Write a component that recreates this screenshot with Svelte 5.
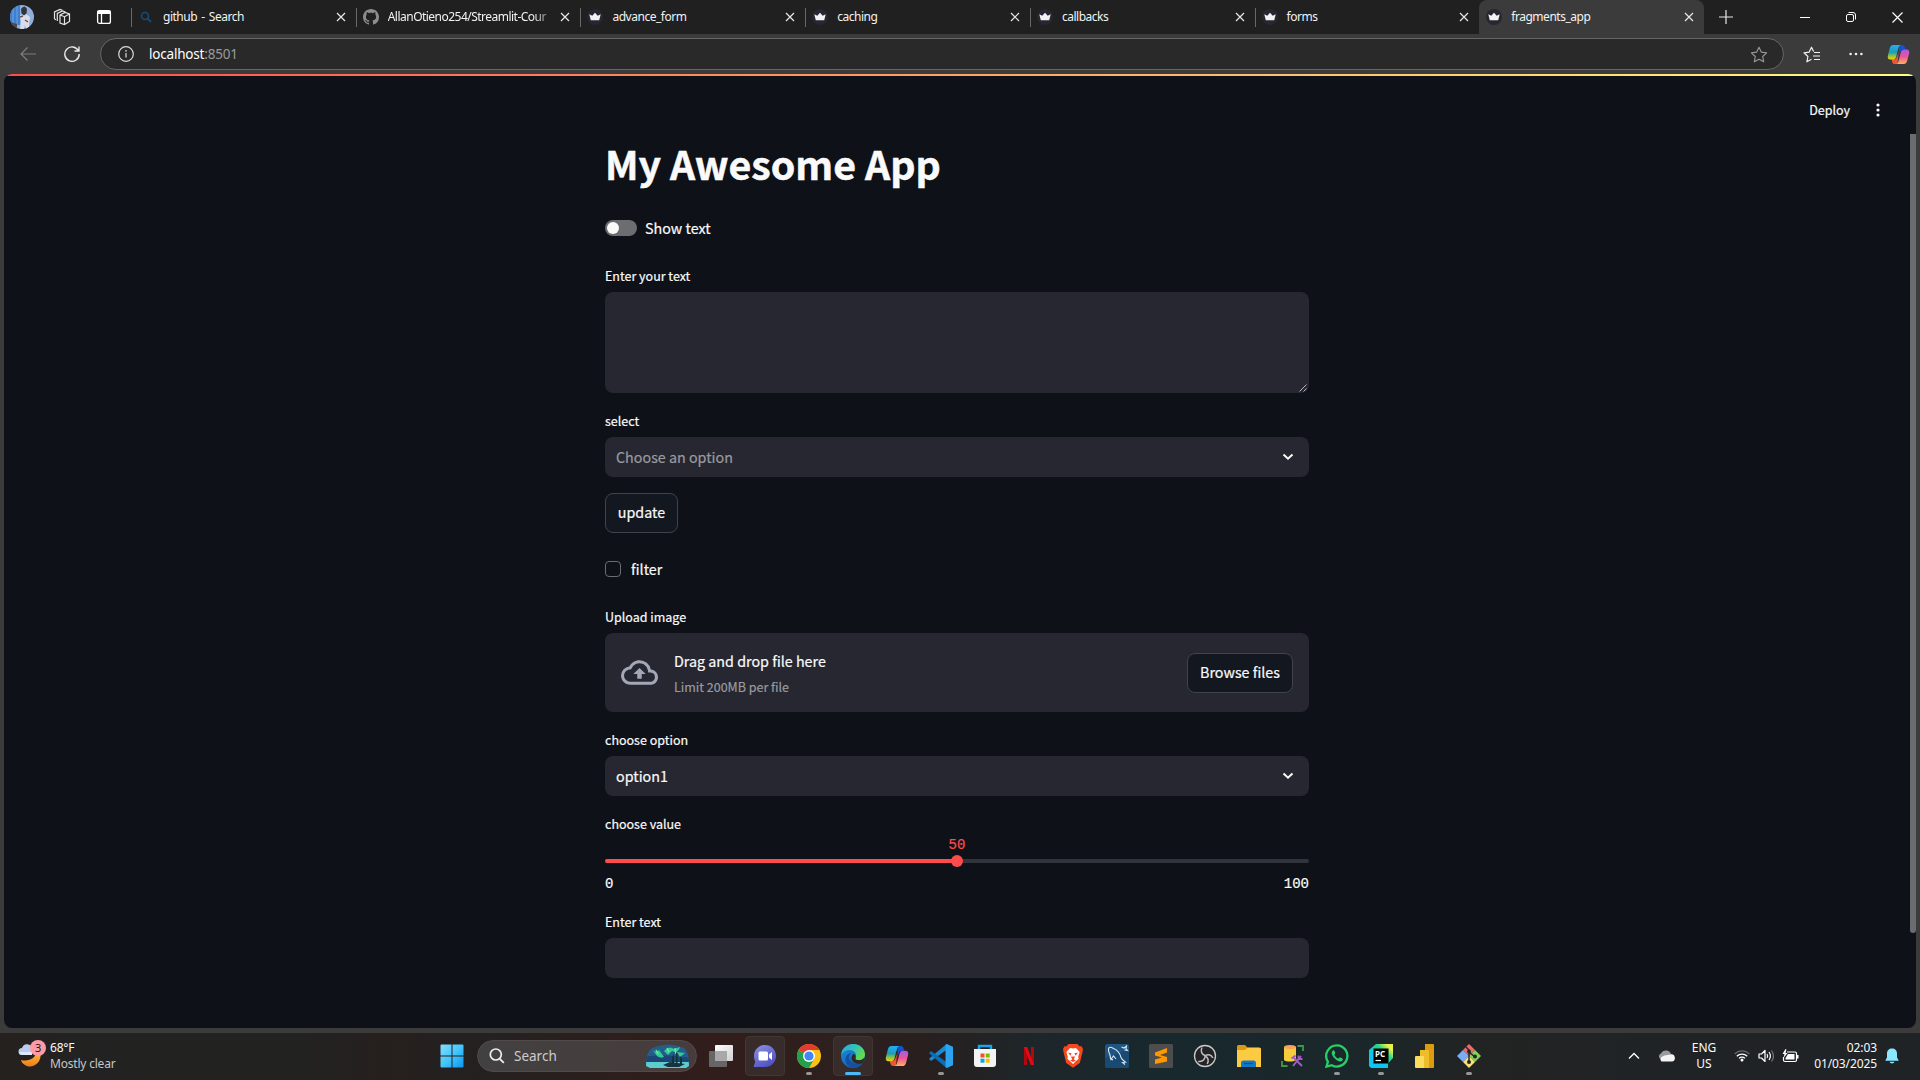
<script>
  const tabs = [
    { title: 'github - Search', icon: 'search' },
    { title: 'AllanOtieno254/Streamlit-Cour', icon: 'github', fade: true },
    { title: 'advance_form', icon: 'crown' },
    { title: 'caching', icon: 'crown' },
    { title: 'callbacks', icon: 'crown' },
    { title: 'forms', icon: 'crown' },
    { title: 'fragments_app', icon: 'crown', active: true }
  ];
  const apps = [
    { name: 'taskview' },
    { name: 'chat', lit: true },
    { name: 'chrome', open: true },
    { name: 'edge', lit: true, focus: true },
    { name: 'copilot' },
    { name: 'vscode', open: true },
    { name: 'store' },
    { name: 'netflix' },
    { name: 'brave' },
    { name: 'mysql' },
    { name: 'sublime' },
    { name: 'obs' },
    { name: 'folder' },
    { name: 'sqltools' },
    { name: 'whatsapp', open: true },
    { name: 'pycharm', open: true },
    { name: 'powerbi' },
    { name: 'git', open: true }
  ];
  let value = 50;
</script>

{#snippet close()}
  <svg class="close" width="10" height="10" viewBox="0 0 10 10"><path d="M1 1l8 8M9 1l-8 8" stroke="#e8e8e8" stroke-width="1.2" fill="none" /></svg>
{/snippet}

{#snippet copilot(size)}
  <svg width={size} height={size} viewBox="0 0 24 24">
    <defs>
      <linearGradient id="cpA" x1="0" y1="0" x2="0" y2="1"><stop offset="0" stop-color="#22b0f5" /><stop offset=".5" stop-color="#1f9bb8" /><stop offset=".75" stop-color="#8cc43c" /><stop offset="1" stop-color="#f5d30f" /></linearGradient>
      <linearGradient id="cpB" x1="0" y1="0" x2="0" y2="1"><stop offset="0" stop-color="#a45bea" /><stop offset=".5" stop-color="#ec5597" /><stop offset="1" stop-color="#ffb260" /></linearGradient>
    </defs>
    <path d="M13 2h3c1.500 0 2.200 1 2.600 2.500l.6 2.300h-2.500c-1.600 0-2.400.8-2.900 2.400L12 14z" fill="#1552d0" />
    <path d="M11 22H8c-1.500 0-2.200-1-2.600-2.500L4.800 17h2.500c1.600 0 2.400-.8 2.900-2.400L12 10z" fill="#f2562e" />
    <path d="M6.500 2h8c-1.300.3-2 1.300-2.400 2.700L9.600 14c-.6 2.200-1.500 3.300-3.800 3.300H3.600C1 17.300.3 15.400 1 12.700l2-7.600C3.600 3 4.600 2 6.500 2z" fill="url(#cpA)" />
    <path d="M17.500 22h-8c1.300-.3 2-1.300 2.400-2.700l2.500-9.300c.6-2.200 1.500-3.300 3.800-3.300h2.200c2.600 0 3.300 1.900 2.600 4.600l-2 7.600c-.6 2.100-1.600 3.100-3.500 3.100z" fill="url(#cpB)" />
  </svg>
{/snippet}

{#snippet chevron()}
  <svg width="12" height="8" viewBox="0 0 12 8"><path d="M1.500 1.500L6 5.700l4.500-4.200" fill="none" stroke="#fafafa" stroke-width="2" /></svg>
{/snippet}

{#snippet appIcon(name)}
  {#if name === 'copilot'}
    {@render copilot(24)}
  {:else}
    <svg width="24" height="24" viewBox="0 0 24 24">
      {#if name === 'taskview'}
        <defs><linearGradient id="tvA" x2="1" y2="1"><stop stop-color="#fff" /><stop offset="1" stop-color="#d0d0d0" /></linearGradient></defs>
        <rect x="6" y="1" width="18" height="16" rx="1" fill="url(#tvA)" />
        <rect x="0" y="7" width="18" height="16" rx="1" fill="#666" />
        <rect x="6" y="7" width="12" height="10" fill="#a9a9a9" />
      {:else if name === 'chat'}
        <defs><linearGradient id="chA" x2=".6" y2="1"><stop stop-color="#8f92e0" /><stop offset="1" stop-color="#5052c5" /></linearGradient></defs>
        <path d="M12 1C18.200 1 23 5.800 23 12S18.200 23 12 23H1.500Q.5 23 .9 22L2.300 17.500C1.400 15.800 1 14 1 12 1 5.800 5.800 1 12 1z" fill="url(#chA)" />
        <rect x="5.500" y="7.500" width="9.500" height="9" rx="1.500" fill="#fff" /><path d="M16 10.500l3-2.500v8l-3-2.500z" fill="#fff" />
      {:else if name === 'chrome'}
        <circle cx="12" cy="12" r="12" fill="#fbc116" />
        <path d="M12 12L1.600 6A12 12 0 0122.400 6H12z" fill="#e33b2e" />
        <path d="M1.600 6A12 12 0 0012 24l5.200-9L12 12z" fill="#24a148" />
        <circle cx="12" cy="12" r="6" fill="#fff" /><circle cx="12" cy="12" r="4.600" fill="#4285f4" />
      {:else if name === 'edge'}
        <defs>
          <linearGradient id="edA" x1="0" x2="1" y2=".5"><stop stop-color="#2aa6e0" /><stop offset=".6" stop-color="#36c5b0" /><stop offset="1" stop-color="#63dc4b" /></linearGradient>
          <linearGradient id="edB" x2=".5" y2="1"><stop stop-color="#1d8fdb" /><stop offset="1" stop-color="#1262b5" /></linearGradient>
        </defs>
        <circle cx="12" cy="12" r="12" fill="url(#edB)" />
        <path d="M0 11C1 4 6 0 12 0c7 0 12 5 12 10.500 0 3.500-2.500 5.700-6 5.700-2.500 0-3.900-1-3.500-2C16.500 9 12.500 6 8.500 6 4.500 6 1.200 8.300 0 11z" fill="url(#edA)" />
        <path d="M10 9.500c-5 4 0 12.500 10.500 10-5 6.800-15 4.500-16-3C4 12 7 9.200 10 9.500z" fill="#1450a0" />
        <path d="M14.500 14.200c-.5 1 1 2 3.500 2 2.600 0 4.600-1.200 5.500-3 .2 2-.6 4.200-2 6-6 2-11-1.200-11-5.200 0-1.900 1-3.400 2.500-4 1.500.7 2.200 2.500 1.500 4.200z" fill="#302825" />
      {:else if name === 'vscode'}
        <path d="M17.500 0L24 3v18l-6.500 3z" fill="#2aa5f2" />
        <path d="M17.500 0L0 14.800l2 2.200 16-11.500z" fill="#1b89d3" />
        <path d="M17.500 24L0 9.200 2 7l16 11.500z" fill="#0a6db5" />
        <path d="M17.500 0L24 3v18l-6.500 3-1-1.500V1.500z" fill="#2ba3ef" />
      {:else if name === 'store'}
        <path d="M6 7V2h12v5" fill="none" stroke="#1fa3e8" stroke-width="2.400" />
        <path d="M1 5h22v15q0 3-3 3H4q-3 0-3-3z" fill="#f3f3f3" />
        <path d="M7.500 9.500h4v4h-4z" fill="#f25022" /><path d="M12.700 9.500h4v4h-4z" fill="#7fba00" /><path d="M7.500 14.700h4v4h-4z" fill="#00a4ef" /><path d="M12.700 14.700h4v4h-4z" fill="#ffb900" />
      {:else if name === 'netflix'}
        <path d="M7 3h3v18H7zM14 3h3v18h-3z" fill="#b30710" /><path d="M7 3h3.200L17 21h-3.200z" fill="#e50914" />
      {:else if name === 'brave'}
        <path d="M7.500 0h9l2 2.300 2-.1L22 5l-.5 3L18.800 19 12 23.800 5.200 19 2.500 8 2 5l1.500-2.800 2 .1z" fill="#f6471d" />
        <path d="M12 4.500l3-.5 3.600 4-1.300 4.500.2 2.500-3 2.500-2.500 2.500-2.500-2.500-3-2.500.2-2.500L5.400 8 9 4z" fill="#fff" />
        <path d="M7 8.500l3.500.8-1 2.500zM17 8.500l-3.500.8 1 2.500zM10 12.500h4l-1.200 3 2 1L12 18l-2.800-1.500 2-1z" fill="#f6471d" />
      {:else if name === 'mysql'}
        <rect width="24" height="24" rx="2.500" fill="#1f5583" /><path d="M0 14l24-9v17q0 2-2 2H2q-2 0-2-2z" fill="#194a73" />
        <path d="M8 16L5.500 14.500 5 11C3.500 8 3 5.500 4 3.800 5 2.500 7 3.500 8.500 4.500c4 1.500 6.500 5 7.500 9 .8 2 2.800 3.500 4.500 4.700l-3 .3 2.500 2M5 11l1 4.500L8.500 12l2.500 3M16.500 3l2.500 1 2.500-2-.5 3 1.500 1.500-3-.5" fill="none" stroke="#dbe9f1" stroke-width="1.100" />
      {:else if name === 'sublime'}
        <rect width="24" height="24" rx="1.500" fill="#4d4d4d" />
        <path d="M6 8.500L18 4v4.500l-7 2.500 7 2v4.500L6 20v-4.500l7-2-7-2z" fill="#ff9800" />
      {:else if name === 'obs'}
        <circle cx="12" cy="12" r="10.500" fill="#232326" stroke="#c9c9c9" stroke-width="1.300" />
        <path d="M9 3.500c-2 4 0 7 3.200 8.300M20 14c-2-4-5.800-4-7.800-2.200M12.200 11.800c-.2 4-3 6.200-7 5.700M12.200 11.800c3.300 2 3.600 5 2 8" fill="none" stroke="#bdbdbd" stroke-width="1.500" />
      {:else if name === 'folder'}
        <path d="M0 2.500Q0 1 1.500 1H8l2.500 2.500H22q2 0 2 2V10H0z" fill="#d79a12" />
        <path d="M0 6h8l2.500-2.200H22.500Q24 3.800 24 5.500V23H0z" fill="#fccb42" />
        <path d="M4 23v-4q0-2.500 2.500-2.500h10Q19 16.500 19 19v4z" fill="#1278cc" /><path d="M7 19.500h9" stroke="#0a4f91" stroke-width="1.300" />
      {:else if name === 'sqltools'}
        <path d="M3 3v13c2 2 9 2 12 0V3z" fill="#f7cc3b" /><ellipse cx="9" cy="3" rx="6" ry="2" fill="#f7a35c" />
        <path d="M16.500 2H22v5M1 17v5h5.500" fill="none" stroke="#3e9a48" stroke-width="1.800" />
        <path d="M12 13l9 9M20 12l-8 10" stroke="#a35ac4" stroke-width="2" /><path d="M10.500 14.500l4-3M17.500 11.500v3.500h4" stroke="#a35ac4" stroke-width="1.800" fill="none" />
      {:else if name === 'whatsapp'}
        <path d="M12 1.300a10.600 10.600 0 11-5.300 19.900L1.500 22.600l1.400-5A10.600 10.600 0 0112 1.300z" fill="#19292d" stroke="#27cf66" stroke-width="2.300" />
        <path d="M8.500 6.300c-3 1.300-2 5 1.200 8.200s6.800 4.300 8.200 1.300c.4-1-.6-1.500-2.600-2.400-1-.3-1.300 1.500-2.100 1.200-1.600-.7-3.100-2.200-3.700-3.700-.3-.8 1-1.200.7-2.200-.5-1.700-.9-2.600-1.700-2.400z" fill="#27cf66" />
      {:else if name === 'pycharm'}
        <defs><linearGradient id="pyA" x1="0" y1="1" x2="1" y2="0"><stop offset=".35" stop-color="#0cc5f0" /><stop offset=".65" stop-color="#21d789" /><stop offset=".85" stop-color="#e8f04a" /></linearGradient></defs>
        <path d="M7 0h17v14l-5 5.500V24H2l-2-2V6z" fill="url(#pyA)" /><rect x="4.500" y="4.500" width="15" height="15" />
        <text x="6" y="12.500" class="pc">PC</text><path d="M6.500 16.500h5.500" stroke="#fff" stroke-width="1.200" />
      {:else if name === 'powerbi'}
        <path d="M12 0h8q1 0 1 1v22q0 1-1 1h-8z" fill="#dc9b10" /><path d="M7 6h8q1 0 1 1v17H7z" fill="#efbd28" /><path d="M2 13q0-1 1-1h7q1 0 1 1v11H3q-1 0-1-1z" fill="#fbdc5c" />
      {:else}
        <path d="M12 0l6 6-6 6-6-6z" fill="#f06a6a" /><path d="M6 6l6 6-6 6-6-6z" fill="#79aef7" /><path d="M18 6l6 6-6 6-6-6z" fill="#83cf59" /><path d="M12 12l6 6-6 6-6-6z" fill="#fbe07a" />
        <path d="M9 3l3 3v13M12 8l6 5" fill="none" stroke="#262626" stroke-width="1.500" /><circle cx="12" cy="7.500" r="2" fill="#262626" /><circle cx="12" cy="18" r="2" fill="#262626" /><circle cx="18" cy="12.500" r="2" fill="#262626" />
      {/if}
    </svg>
  {/if}
{/snippet}

<div class="screen">
  <div class="tabstrip">
    <div class="profile">
      <svg width="24" height="24" viewBox="0 0 24 24">
        <defs><clipPath id="av"><circle cx="12" cy="12" r="12" /></clipPath></defs>
        <g clip-path="url(#av)">
          <rect width="24" height="24" fill="#8fb0dc" /><path d="M0 0h10v20H0z" fill="#3f7fcf" /><path d="M3 0v20M7 0v20" stroke="#6ca2e3" />
          <path d="M10 10l6-1 4 3-1 7 1 5h-4l-1-4-1 4h-4l1-7z" fill="#dadceb" /><path d="M11 4q3.500-5 6 0l-.5 4.500-2.500 2-2.500-2z" fill="#33343e" /><path d="M10 12l3-1M15 15l3 2" stroke="#69514b" stroke-width="1.500" /><path d="M0 17l7 2v5H0z" fill="#59453f" />
        </g>
      </svg>
    </div>
    <div class="tool">
      <svg width="18" height="18" viewBox="0 0 18 18" fill="none" stroke="#e4e4e4" stroke-width="1.200"><path d="M7 7l5-2.500 4.500 1.500v7.500l-5 3L7 15zM7 7l4.500 1.700 5-2.700M11.500 8.700v7.500M4.300 13V5.500L9.500 3l3 1M1.500 11V4L7 1.500l2.500.8M1.500 11l1.500.8" /></svg>
    </div>
    <div class="tool second">
      <svg width="16" height="16" viewBox="0 0 16 16"><rect x="1.600" y="1.600" width="12.800" height="12.800" rx="2" fill="none" stroke="#fff" stroke-width="1.300" /><path d="M1.500 1.500h13V5h-13z" fill="#fff" /><path d="M5.500 5v9" stroke="#fff" stroke-width="1.300" /></svg>
    </div>
    <div class="tabs">
      {#each tabs as tab}
        <div class="tab" class:active={tab.active}>
          <span class="favicon">
            {#if tab.icon === 'search'}
              <svg width="12" height="12" viewBox="0 0 12 12"><circle cx="5" cy="5" r="3.500" fill="none" stroke="#174a78" stroke-width="1.600" /><path d="M7.500 7.500l3.500 3.500" stroke="#174a78" stroke-width="1.800" /></svg>
            {:else if tab.icon === 'github'}
              <svg width="16" height="16" viewBox="0 0 16 16"><path fill="#8d8d8d" d="M8 0C3.580 0 0 3.580 0 8c0 3.540 2.290 6.530 5.470 7.590.4.070.55-.17.55-.38 0-.19-.01-.82-.01-1.490-2.010.37-2.530-.49-2.690-.94-.09-.23-.48-.94-.82-1.130-.28-.15-.68-.52-.01-.53.63-.01 1.080.58 1.230.82.72 1.210 1.870.87 2.330.66.07-.52.28-.87.51-1.070-1.780-.2-3.640-.89-3.640-3.950 0-.87.31-1.590.82-2.150-.08-.2-.36-1.020.08-2.120 0 0 .67-.21 2.200.82.64-.18 1.320-.27 2-.27s1.360.09 2 .27c1.530-1.040 2.200-.82 2.200-.82.44 1.100.16 1.920.08 2.120.51.56.82 1.270.82 2.150 0 3.070-1.870 3.750-3.650 3.950.29.25.54.73.54 1.480 0 1.070-.01 1.930-.01 2.200 0 .21.15.46.55.38A8.010 8.010 0 0016 8c0-4.420-3.580-8-8-8z" /></svg>
            {:else}
              <svg width="16" height="16" viewBox="0 0 16 16"><circle cx="8" cy="8" r="8" fill="#262730" /><path d="M2.300 5.200l3 1.500L8 3.800l2.700 2.900 3-1.500-1.500 6H3.800z" fill="#f2f2f4" /></svg>
            {/if}
          </span>
          <span class="title" class:fade={tab.fade}>{tab.title}</span>
          {@render close()}
        </div>
      {/each}
    </div>
    <svg class="plus" width="14" height="14" viewBox="0 0 14 14"><path d="M7 0v14M0 7h14" stroke="#e8e8e8" stroke-width="1.200" /></svg>
    <div class="window-buttons">
      <svg width="10" height="10" viewBox="0 0 10 10"><path d="M0 5.500h10" stroke="#fff" /></svg>
      <svg width="10" height="10" viewBox="0 0 10 10" fill="none" stroke="#fff"><rect x=".5" y="2.500" width="7" height="7" rx="1.500" /><path d="M2.500.5H7Q9.500.5 9.500 3v4.500" /></svg>
      <svg width="11" height="11" viewBox="0 0 11 11"><path d="M.5.500l10 10M10.500.500l-10 10" stroke="#fff" stroke-width="1.200" /></svg>
    </div>
  </div>

  <div class="toolbar">
    <svg class="back" width="16" height="14" viewBox="0 0 16 14" fill="none" stroke="#7e7e7e" stroke-width="1.200"><path d="M16 7H1M7.500.5L1 7l6.500 6.500" /></svg>
    <svg class="reload" width="16" height="16" viewBox="0 0 16 16" fill="none" stroke="#e8e8e8" stroke-width="1.400"><path d="M14.500 5A7.200 7.200 0 1015.200 8M15 .5V5h-4.500" /></svg>
    <div class="address">
      <svg width="16" height="16" viewBox="0 0 16 16"><circle cx="8" cy="8" r="7.300" fill="none" stroke="#dcdcdc" stroke-width="1.200" /><path d="M8 7v4.500" stroke="#dcdcdc" stroke-width="1.200" /><circle cx="8" cy="4.900" r=".8" fill="#dcdcdc" /></svg>
      <span class="url">localhost<i>:8501</i></span>
      <svg width="18" height="17" viewBox="0 0 18 17"><path d="M9 1.200l2.300 4.900 5.300.7-3.900 3.700 1 5.300L9 13.200l-4.700 2.600 1-5.300L1.400 6.800l5.300-.7z" fill="none" stroke="#9a9a9a" stroke-width="1.100" stroke-linejoin="round" /></svg>
    </div>
    <svg class="fav" width="18" height="17" viewBox="0 0 18 17" fill="none" stroke="#f0f0f0" stroke-width="1.200" stroke-linejoin="round"><path d="M10.600 5.500L8.500 1.200 6.200 6.100l-5.200.7 3.900 3.700-1 5.300 4.600-2.500M11 6.500h6M10 10h7M11 13.500h6" /></svg>
    <svg class="more" width="14" height="4" viewBox="0 0 14 4" fill="#f0f0f0"><circle cx="1.600" cy="2" r="1.300" /><circle cx="7" cy="2" r="1.300" /><circle cx="12.400" cy="2" r="1.300" /></svg>
    {@render copilot(23)}
  </div>

  <div class="frame">
    <div class="page">
      <div class="decoration"></div>
      <header>
        <span>Deploy</span>
        <svg width="4" height="14" viewBox="0 0 4 14" fill="#fafafa"><circle cx="2" cy="2" r="1.600" /><circle cx="2" cy="7" r="1.600" /><circle cx="2" cy="12" r="1.600" /></svg>
      </header>
      <main>
        <h1>My Awesome App</h1>
        <div class="toggle-row"><span class="toggle"></span><span class="t-show">Show text</span></div>
        <div class="label l-area">Enter your text</div>
        <div class="field area">
          <svg width="8" height="8" viewBox="0 0 8 8"><path d="M.5 7.500l7-7M4.500 7.500l3-3" stroke="#c4c4c8" stroke-width=".9" /></svg>
        </div>
        <div class="label l-select">select</div>
        <div class="field"><span class="placeholder">Choose an option</span>{@render chevron()}</div>
        <button class="update">update</button>
        <div class="check-row"><span class="box"></span><span>filter</span></div>
        <div class="label l-upload">Upload image</div>
        <div class="field upload">
          <svg width="37" height="37" viewBox="0 0 24 24" fill="#a3a8b8"><path d="M19.350 10.040A7.490 7.490 0 0012 4C9.110 4 6.600 5.640 5.350 8.040A5.994 5.994 0 000 14c0 3.310 2.690 6 6 6h13c2.760 0 5-2.240 5-5 0-2.640-2.050-4.780-4.650-4.960zM19 18H6c-2.210 0-4-1.790-4-4 0-2.050 1.530-3.760 3.560-3.970l1.070-.11.5-.95A5.469 5.469 0 0112 6c2.620 0 4.880 1.860 5.390 4.430l.3 1.500 1.530.11A2.980 2.980 0 0122 15c0 1.650-1.350 3-3 3zM8 13h2.550v3h2.900v-3H16l-4-4z" /></svg>
          <div class="hint"><span>Drag and drop file here</span><small>Limit 200MB per file</small></div>
          <button class="browse">Browse files</button>
        </div>
        <div class="label l-option">choose option</div>
        <div class="field"><span>option1</span>{@render chevron()}</div>
        <div class="label l-value">choose value</div>
        <div class="slider">
          <div class="thumb-value">{value}</div>
          <div class="track"><div class="filled" style="width: {value}%"></div><div class="thumb"></div></div>
          <div class="ticks"><span>0</span><span>100</span></div>
        </div>
        <div class="label l-text">Enter text</div>
        <div class="field"></div>
      </main>
      <div class="scrollbar"></div>
    </div>
  </div>

  <footer>
    <div class="weather">
      <svg width="28" height="28" viewBox="0 0 28 28">
        <defs><linearGradient id="mn" x2="0" y2="1"><stop stop-color="#ffc340" /><stop offset="1" stop-color="#ee7a1b" /></linearGradient></defs>
        <path d="M22 12c3 10-7 18-15 13-2-1-3.500-3-4-5 8 2 15-2 16-9z" fill="url(#mn)" />
        <path d="M4 15a3.500 3.500 0 010-7 5.500 5.500 0 0110-1v8z" fill="#b8cbf1" /><path d="M1 12h13v3H4q-2.500 0-3-3z" fill="#dee8fa" />
        <circle cx="20" cy="8" r="8" fill="#fd9ba5" /><text x="20" y="12" text-anchor="middle" class="badge">3</text>
      </svg>
      <div class="forecast"><span>68°F</span><span class="dim">Mostly clear</span></div>
    </div>
    <div class="dock">
      <div class="start">
        <svg width="24" height="24" viewBox="0 0 24 24"><defs><linearGradient id="wn" x2="1" y2="1" gradientUnits="userSpaceOnUse" gradientTransform="scale(24)"><stop stop-color="#87e0ff" /><stop offset=".5" stop-color="#45c5fb" /><stop offset="1" stop-color="#0a93f5" /></linearGradient></defs><path d="M.5 1.500q0-1 1-1h10v11H.5zM12.500.5h10q1 0 1 1v10h-11zM.5 12.500h11v11h-10q-1 0-1-1zM12.500 12.500h11v10q0 1-1 1h-10z" fill="url(#wn)" /></svg>
      </div>
      <div class="search">
        <svg width="16" height="16" viewBox="0 0 16 16"><circle cx="6.800" cy="6.500" r="5.500" fill="none" stroke="#ededed" stroke-width="1.700" /><path d="M10.800 10.800l4 4" stroke="#ededed" stroke-width="1.900" /></svg>
        <span>Search</span>
        <svg width="44" height="24" viewBox="0 0 44 24">
          <defs><clipPath id="au"><path d="M6 4Q22-3 38 4 43 7 43 22L40 24H4L0 22Q0 8 6 4z" /></clipPath></defs>
          <g clip-path="url(#au)">
            <rect width="44" height="24" fill="#245d8b" /><path d="M0 13Q12 9 44 14v6H0z" fill="#1d4676" />
            <path d="M5 5q4 5 8 1l5 7q-6 2-9-4zM18 7q5-6 10-2l6-2q-2 7-8 4l-4 4zM31 8l8 1-5 4z" fill="#35c997" />
            <path d="M10 6l2 4M21 4l2 4M29 4l1 6" stroke="#70e7a1" stroke-width="1.500" />
            <path d="M0 18h43v6H0z" fill="#5ccccd" /><path d="M17 21l7-3 15 2-6 3H22z" fill="#15343f" />
            <path d="M26 20v-7l2-3v10zM30 19V8l1.500 2v9zM34 20v-8l2 3v5z" fill="#12323c" />
          </g>
        </svg>
      </div>
      {#each apps as app}
        <div class="app" class:lit={app.lit}>
          {@render appIcon(app.name)}
          {#if app.open || app.focus}<i class="dot" class:focus={app.focus}></i>{/if}
        </div>
      {/each}
    </div>
    <div class="tray">
      <svg width="12" height="8" viewBox="0 0 12 8"><path d="M1 6.500L6 1.500l5 5" fill="none" stroke="#fff" stroke-width="1.300" /></svg>
      <svg class="cloud" width="17" height="12" viewBox="0 0 17 12"><path d="M2.500 9A3 3 0 013 3.500 5.500 5.500 0 0113 4l1 4z" fill="#9a9a9a" /><path d="M3.500 11.500a3 3 0 010-4.500l3-1.500 6-1a3.500 3.500 0 011.500 7z" fill="#f4f4f4" /></svg>
      <div class="lang"><span>ENG</span><span>US</span></div>
      <svg class="wifi" width="16" height="13" viewBox="0 0 16 13" fill="none"><path d="M.7 5a10 10 0 0114.600 0" stroke="#666" stroke-width="1.200" /><path d="M2.800 7.300a7.300 7.300 0 0110.400 0M5 9.400a4.300 4.300 0 016 0" stroke="#fff" stroke-width="1.300" /><circle cx="8" cy="11" r="1.500" fill="#fff" /></svg>
      <svg class="speaker" width="17" height="14" viewBox="0 0 17 14" fill="none" stroke="#fff" stroke-width="1.200"><path d="M1 5h2.500L7 1.500v11L3.500 9H1z" stroke-linejoin="round" /><path d="M9 5q1.300 2 0 4M11 3q2.800 4 0 8" /><path d="M13.500 1.500q4 5.500 0 11" stroke="#777" /></svg>
      <svg class="battery" width="17" height="14" viewBox="0 0 17 14"><path d="M5 3h8q1.500 0 1.500 1.500V11q0 1.500-1.500 1.500H3Q1.500 12.500 1.500 11V8" fill="none" stroke="#fff" stroke-width="1.200" /><path d="M6 5h6.500v5.500h-9V9zM15 6h1.500v3.500H15zM3.500 0L.5 5h2l-1 4L5.500 4h-2L4.500.5z" fill="#fff" /></svg>
      <div class="clock"><span>02:03</span><span>01/03/2025</span></div>
      <svg class="bell" width="14" height="16" viewBox="0 0 14 16"><path d="M7 .5c3 0 5 2 5 5v4l1.500 2.500v.8H.5V12L2 9.500v-4c0-3 2-5 5-5zM4.500 13.800h5Q9 15.500 7 15.500t-2.500-1.700z" fill="#8be6ff" /></svg>
    </div>
  </footer>
</div>

<style>
  :global(body) { background: #3b3b3b; overflow: hidden; }
  .screen { width: 1920px; height: 1080px; display: flex; flex-direction: column; background: #3b3b3b; color: #fafafa; font: 12px/16px 'Noto Sans', 'Open Sans', sans-serif; }
  .screen * { box-sizing: border-box; }
  svg { display: block; flex: none; }

  .tabstrip { height: 34px; display: flex; align-items: center; background: #202020; }
  .profile { width: 24px; margin-left: 10px; }
  .tool { margin-left: 19px; }
  .tool.second { margin-left: 25px; width: 35px; }
  .tabs { display: flex; width: 1573px; height: 34px; }
  .tab { flex: 1; min-width: 0; display: flex; align-items: center; padding: 0 10px 0 7px; position: relative; color: #f2f2f2; }
  .tab::before { content: ''; position: absolute; left: 0; top: 8px; width: 1px; height: 19px; background: #686868; }
  .tab.active { background: #3b3b3b; border-radius: 8px 8px 0 0; }
  .tab.active::before { display: none; }
  .favicon { width: 16px; display: flex; justify-content: center; margin-right: 9px; }
  .title { flex: 1; min-width: 0; white-space: nowrap; font-size: 12px; letter-spacing: -0.48px; word-spacing: 1.500px; margin-right: 8px; }
  .title.fade { letter-spacing: -0.52px; mask-image: linear-gradient(90deg, #000 88%, rgba(0, 0, 0, 0.25)); }
  .plus { margin-left: 15px; }
  .window-buttons { margin-left: auto; display: flex; align-items: center; gap: 36px; padding-right: 17px; }

  .toolbar { height: 40px; display: flex; align-items: center; }
  .back { margin-left: 20px; }
  .reload { margin-left: 28px; }
  .address { margin-left: 20px; width: 1684px; height: 32px; border: 1px solid #666; border-radius: 16px; background: #292929; display: flex; align-items: center; padding: 0 15px 0 17px; }
  .url { flex: 1; margin-left: 15px; font-size: 13.500px; letter-spacing: -0.2px; color: #fff; }
  .url i { font-style: normal; color: #9a9a9a; }
  .fav { margin-left: 19px; }
  .more { margin: 0 24px 0 28px; }

  .frame { height: 959px; padding: 0 4px 5px; }
  .page { height: 954px; border-radius: 8px; overflow: hidden; background: #0e1117; position: relative; font-family: 'Noto Sans CJK SC', 'Noto Sans CJK JP', sans-serif; font-size: 14.300px; line-height: 20px; -webkit-text-stroke: 0.200px; }
  .decoration { height: 2px; background: linear-gradient(90deg, #ff4b4b, #fffd80); }
  header { height: 60px; display: flex; justify-content: flex-end; align-items: center; padding: 8px 36px 0 0; gap: 26px; font-size: 12.500px; }
  .scrollbar { position: absolute; right: 0; top: 60px; width: 6px; height: 799px; background: #6b6c70; border-radius: 0 0 3px 3px; }
  main { width: 704px; margin-left: 601px; display: flex; flex-direction: column; align-items: stretch; }
  h1 { margin: 0; height: 54px; font-size: 39.300px; line-height: 54px; font-weight: 700; white-space: nowrap; -webkit-text-stroke: 0.500px; }
  .toggle-row { margin-top: 28px; height: 20px; display: flex; align-items: center; gap: 8px; }
  .toggle { width: 32px; height: 16px; border-radius: 8px; background: #6c6d71; padding: 2px; }
  .toggle::before { content: ''; display: block; width: 12px; height: 12px; border-radius: 50%; background: #fafafa; }
  .label { height: 20px; font-size: 12.500px; }
  .l-area { margin-top: 28px; margin-bottom: 6px; }
  .field { height: 40px; border-radius: 8px; background: #262730; display: flex; align-items: center; justify-content: space-between; padding: 0 15px 0 11px; }
  .area { height: 101px; align-items: flex-end; justify-content: flex-end; padding: 0 2px 1px; }
  .l-select { margin: 18px 0 6px; }
  .placeholder { color: #9a9a9f; }
  button { font: inherit; color: #fafafa; background: #131720; border: 1px solid #41434a; border-radius: 8px; height: 40px; padding: 0 0 2px; white-space: nowrap; }
  .update { width: 73px; margin-top: 16px; }
  .check-row { margin-top: 26px; height: 20px; display: flex; align-items: center; gap: 10px; }
  .box { width: 16px; height: 16px; border: 1px solid #6c6d71; border-radius: 4px; }
  .l-upload { margin: 28px 0 6px; }
  .upload { height: 79px; padding: 0 16px 0 16px; }
  .hint { flex: 1; margin-left: 16px; padding-top: 2px; display: flex; flex-direction: column; gap: 6px; }
  .hint small { font-size: 12.500px; color: #9a9a9f; }
  .browse { width: 106px; }
  .l-option { margin: 18px 0 6px; }
  .l-value { margin: 18px 0 0; }
  .slider { font: 14px/16px 'Liberation Mono', monospace; }
  .thumb-value { height: 25px; padding-top: 3px; text-align: center; color: #ff4b4b; }
  .track { height: 4px; border-radius: 2px; background: #31333d; position: relative; }
  .filled { height: 4px; border-radius: 2px; background: #ff4b4b; }
  .thumb { position: absolute; left: 50%; top: -4px; margin-left: -6px; width: 12px; height: 12px; border-radius: 50%; background: #ff4b4b; }
  .ticks { display: flex; justify-content: space-between; height: 26px; padding-top: 13px; }
  .l-text { margin: 23px 0 6px; }

  footer { height: 47px; padding-bottom: 2px; display: flex; align-items: center; background: linear-gradient(90deg, #25211f 0, #222 5%, #222221 16%, #261f1e 20%, #232120 25%, #2c1f1d 32%, #321d1b 37%, #2c201e 44%, #281f1e 48%, #1d262a 54%, #18282d 60%, #1a272b 70%, #222323 77%, #202326 88%, #202325); }
  .weather { width: 429px; display: flex; padding-left: 18px; gap: 4px; letter-spacing: -0.2px; }
  .forecast { display: flex; flex-direction: column; }
  .dim { color: #c6c6c6; }
  .badge { font: 11px 'Noto Sans', sans-serif; fill: #251719; }
  .pc { font: bold 8px 'Noto Sans', sans-serif; fill: #fff; }
  .dock { display: flex; align-items: center; }
  .start { width: 48px; padding-left: 11px; }
  .search { width: 220px; height: 32px; margin-right: 2px; border-radius: 16px; border: 1px solid #524a49; background: linear-gradient(90deg, #424141, #473c3b); display: flex; align-items: center; padding: 0 6px 0 11px; font-size: 13.500px; color: #ccc; }
  .search span { flex: 1; margin-left: 9px; }
  .app { width: 40px; height: 40px; margin: 0 2px; border-radius: 4px; display: flex; align-items: center; justify-content: center; position: relative; border: 1px solid transparent; }
  .lit { background: #382c2b; border-color: #403634; }
  .dot { position: absolute; bottom: 0; width: 6px; height: 3px; border-radius: 2px; background: #969696; }
  .dot.focus { width: 16px; background: #4cb8f5; }
  .tray { flex: 1; display: flex; align-items: center; justify-content: flex-end; padding-right: 21px; }
  .cloud { margin-left: 18px; }
  .lang, .clock { display: flex; flex-direction: column; }
  .lang { text-align: center; width: 40px; margin-left: 9px; }
  .wifi { margin-left: 10px; }
  .speaker { margin-left: 8px; }
  .battery { margin-left: 7px; }
  .clock { width: 73px; text-align: right; margin: 0 8px 0 5px; letter-spacing: -0.1px; white-space: nowrap; align-items: flex-end; }
</style>
